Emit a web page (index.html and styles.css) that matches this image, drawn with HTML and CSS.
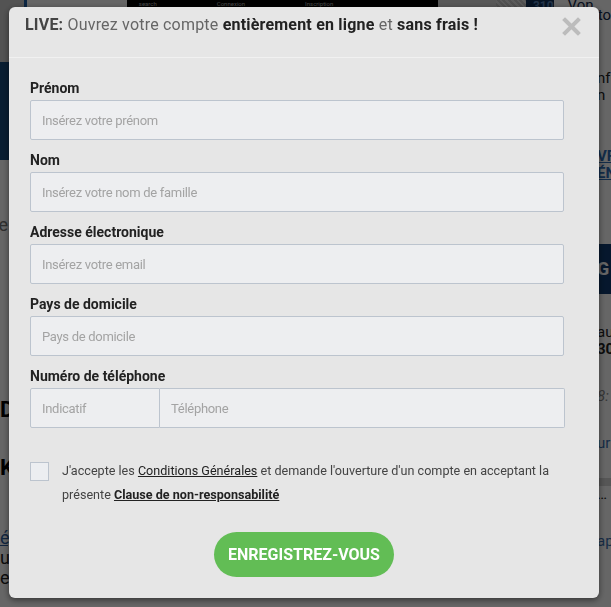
FILE: index.html
```html
<!DOCTYPE html>
<html lang="fr">
  <head>
    <meta charset="UTF-8" />
    <title>Ouvrez votre compte</title>
    <link rel="stylesheet" href="styles.css">
  </head>
  <body>
    <div class="site">
      <div class="site-top">
        <div class="top-left"></div>
        <div class="top-banner"><span>search</span><span>Connexion</span><span>Inscription</span></div>
        <div class="top-gap"></div>
        <div class="top-pattern"></div>
        <div class="top-count">310</div>
        <div class="top-title">Von Krypto</div>
      </div>
      <div class="site-main">
        <div class="main-col">
          <div class="hero"></div>
          <p class="frag frag-le">le</p>
          <p class="frag frag-big">D</p>
          <p class="frag frag-big">K</p>
          <p class="frag frag-link">é,</p>
          <p class="frag">u</p>
          <p class="frag">e</p>
        </div>
        <div class="side-col">
          <p class="side-text">nfü<br>n</p>
          <p class="side-link">VF<br>ÉN</p>
          <div class="side-box">G</div>
          <p class="side-text">au<br><b>30</b></p>
          <p class="side-text side-italic">8:</p>
          <p class="side-text side-blue">ur</p>
          <div class="side-rule"></div>
          <p class="side-text">…</p>
          <p class="side-text side-blue">ap</p>
        </div>
      </div>
    </div>

    <div class="overlay">
      <div class="modal">
        <div class="modal-head">
          <p class="modal-title">
            <b class="live">LIVE:</b> Ouvrez votre compte <b>entièrement en ligne</b> et <b>sans frais !</b>
          </p>
          <button class="close" aria-label="Fermer">
            <svg width="19" height="19" viewBox="0 0 19 19">
              <path d="M3 3 L16 16 M16 3 L3 16" stroke="#bcbcbc" stroke-width="4" stroke-linecap="square" fill="none" />
            </svg>
          </button>
        </div>

        <form class="modal-body">
          <div class="fields">
            <div class="field">
              <label for="prenom">Prénom</label>
              <input id="prenom" type="text" placeholder="Insérez votre prénom">
            </div>
            <div class="field">
              <label for="nom">Nom</label>
              <input id="nom" type="text" placeholder="Insérez votre nom de famille">
            </div>
            <div class="field">
              <label for="email">Adresse électronique</label>
              <input id="email" type="text" placeholder="Insérez votre email">
            </div>
            <div class="field">
              <label for="pays">Pays de domicile</label>
              <input id="pays" type="text" placeholder="Pays de domicile">
            </div>
            <div class="field">
              <label for="tel">Numéro de téléphone</label>
              <div class="phone">
                <input class="prefix" type="text" placeholder="Indicatif">
                <input id="tel" class="number" type="text" placeholder="Téléphone">
              </div>
            </div>

            <div class="terms">
              <span class="checkbox"></span>
              <p>J'accepte les <a href="#">Conditions Générales</a> et demande l'ouverture d'un compte en acceptant la présente <a class="strong" href="#">Clause de non-responsabilité</a></p>
            </div>
          </div>

          <div class="actions">
            <button type="button" class="submit">Enregistrez-vous</button>
          </div>
        </form>
      </div>
    </div>
  </body>
</html>
```

FILE: styles.css
```css
body {
  margin: 0;
  height: 607px;
  overflow: hidden;
  background-color: #fff;
  font-family: Roboto, "Liberation Sans", sans-serif;
}

/* page behind the popup */
.site-top {
  display: flex;
  height: 62px;
  background-color: #fff;
}
.top-left {
  width: 24px;
  border-right: 3px solid #1e5fa8;
  background-color: #cfcfcf;
}
.top-banner {
  width: 290px;
  margin-left: 100px;
  background-color: #000;
  display: flex;
  gap: 60px;
  padding: 0 12px;
  font-size: 6px;
  color: #bbb;
}
.top-gap {
  width: 58px;
  background-color: #dcdcdc;
}
.top-pattern {
  width: 30px;
  background: repeating-linear-gradient(45deg, #c8c8c8 0 2px, #e4e4e4 2px 4px);
}
.top-count {
  width: 28px;
  background-color: #12325a;
  color: #5a84b8;
  font-size: 12px;
  font-weight: bold;
  text-align: right;
  line-height: 12px;
}
.top-title {
  flex: 1;
  padding-left: 14px;
  font-size: 15px;
  line-height: 10px;
  color: #0f2a4e;
}
.site-main {
  display: flex;
}
.main-col {
  flex: 1;
}
.hero {
  height: 98px;
  background-color: #16497c;
}
.frag {
  margin: 0;
  font-size: 18px;
  color: #222;
  line-height: 20px;
}
.frag-le {
  margin-top: 55px;
  margin-left: -6px;
  color: #777;
}
.frag-big {
  margin-top: 165px;
  font-size: 22px;
  font-weight: bold;
  color: #000;
}
.frag-big + .frag-big {
  margin-top: 38px;
}
.frag-link {
  margin-top: 50px;
  text-decoration: underline;
  color: #2b5c9e;
}
.side-col {
  width: 14px;
  padding-left: 1px;
  overflow: hidden;
  background-color: #fff;
}
.side-text,
.side-link {
  margin: 0;
  font-size: 15px;
  line-height: 17px;
  color: #222;
}
.side-text:first-child {
  margin-top: 8px;
}
.side-link {
  margin-top: 44px;
  color: #2f6db5;
  font-weight: bold;
  text-decoration: underline;
}
.side-box {
  margin-top: 62px;
  height: 50px;
  background-color: #0f3b70;
  color: #fff;
  font-weight: bold;
  font-size: 18px;
  line-height: 50px;
}
.side-text + .side-text,
.side-box + .side-text {
  margin-top: 30px;
}
.side-italic {
  font-style: italic;
  color: #888;
}
.side-blue {
  color: #3a6fb0;
}
.side-rule {
  margin-top: 26px;
  height: 8px;
  background-color: #d6d6d6;
}

/* popup */
.overlay {
  position: fixed;
  inset: 0;
  background-color: rgba(0, 0, 0, 0.6);
  padding: 7px 0 0 9px;
}
.modal {
  width: 590px;
  height: 591px;
  background-color: #e6e6e6;
  border-radius: 6px;
  box-shadow: 0 2px 6px rgba(0, 0, 0, 0.5);
  overflow: hidden;
}
.modal-head {
  height: 50px;
  border-bottom: 1px solid #f1f1f1;
  display: flex;
  justify-content: space-between;
  padding: 0 18px 0 16px;
}
.modal-title {
  margin: 8px 0 0;
  font-size: 16px;
  line-height: 20px;
  letter-spacing: 0.2px;
  color: #666;
}
.modal-title b {
  color: #222;
}
.modal-title .live {
  color: #444;
}
.close {
  margin-top: 10px;
  align-self: flex-start;
  padding: 0;
  border: none;
  background: none;
  cursor: pointer;
}
.close svg {
  display: block;
}

.modal-body {
  padding-top: 21px;
}
.fields {
  padding: 0 35px 0 21px;
}
.field {
  margin-bottom: 11px;
}
.field label {
  display: block;
  margin-bottom: 3px;
  font-size: 14px;
  line-height: 18px;
  font-weight: bold;
  color: #222;
}
.field input {
  display: block;
  box-sizing: border-box;
  width: 100%;
  height: 40px;
  padding: 0 11px;
  border: 1px solid #bcc4ce;
  border-radius: 2px;
  background-color: #edeef0;
  font-family: inherit;
  font-size: 13px;
  letter-spacing: -0.3px;
  color: #333;
}
.field input::placeholder {
  color: #a3a3a3;
}
.phone {
  display: flex;
  width: 535px;
}
.phone .prefix {
  width: 130px;
  border-radius: 2px 0 0 2px;
}
.phone .number {
  flex: 1;
  border-left: none;
  border-radius: 0 2px 2px 0;
}

.terms {
  display: flex;
  gap: 13px;
  margin-top: 31px;
}
.checkbox {
  flex: none;
  width: 17px;
  height: 17px;
  margin-top: 3px;
  border: 1px solid #bcc4ce;
  background-color: #eceef1;
}
.terms p {
  margin: 0;
  font-size: 12.6px;
  line-height: 24px;
  color: #444;
}
.terms a {
  color: #222;
  text-decoration: underline;
}
.terms a.strong {
  font-weight: bold;
}

.actions {
  display: flex;
  justify-content: center;
  margin-top: 25px;
}
.submit {
  width: 180px;
  height: 45px;
  border: none;
  border-radius: 23px;
  background-color: #62bd55;
  color: #fff;
  font-family: inherit;
  font-size: 16px;
  font-weight: bold;
  text-transform: uppercase;
  cursor: pointer;
}
```
